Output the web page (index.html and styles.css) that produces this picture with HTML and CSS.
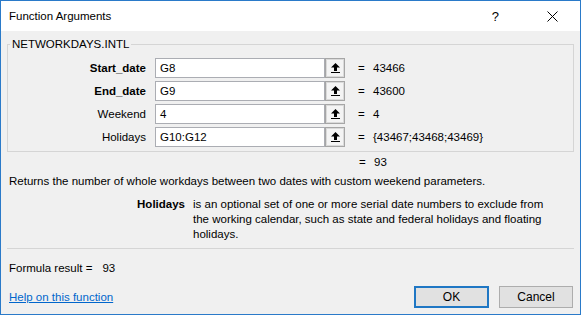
FILE: index.html
```html
<!DOCTYPE html>
<html>

<head>
    <title>Function Arguments</title>
    <link rel="stylesheet" href="styles.css">
</head>

<body>
    <div class="dialog">
        <div class="titlebar">
            <span class="title">Function Arguments</span>
            <span class="help-btn">?</span>
            <svg class="close-btn" width="11" height="11" viewBox="0 0 11 11">
                <path d="M0.5 0.5 L10.5 10.5 M10.5 0.5 L0.5 10.5" stroke="#000" stroke-width="1" fill="none"/>
            </svg>
        </div>

        <div class="content">
            <fieldset class="group">
                <legend>NETWORKDAYS.INTL</legend>

                <div class="arg-row">
                    <label class="arg-label required">Start_date</label>
                    <div class="arg-input">G8</div>
                    <div class="ref-btn">
                        <svg width="9" height="10" viewBox="0 0 9 10"><path d="M4.5 0 L9 4.5 L6 4.5 L6 8 L3 8 L3 4.5 L0 4.5 Z M0 9 H9 V10 H0 Z" fill="#000"/></svg>
                    </div>
                    <span class="eq">=</span>
                    <span class="arg-value">43466</span>
                </div>

                <div class="arg-row">
                    <label class="arg-label required">End_date</label>
                    <div class="arg-input">G9</div>
                    <div class="ref-btn">
                        <svg width="9" height="10" viewBox="0 0 9 10"><path d="M4.5 0 L9 4.5 L6 4.5 L6 8 L3 8 L3 4.5 L0 4.5 Z M0 9 H9 V10 H0 Z" fill="#000"/></svg>
                    </div>
                    <span class="eq">=</span>
                    <span class="arg-value">43600</span>
                </div>

                <div class="arg-row">
                    <label class="arg-label">Weekend</label>
                    <div class="arg-input">4</div>
                    <div class="ref-btn">
                        <svg width="9" height="10" viewBox="0 0 9 10"><path d="M4.5 0 L9 4.5 L6 4.5 L6 8 L3 8 L3 4.5 L0 4.5 Z M0 9 H9 V10 H0 Z" fill="#000"/></svg>
                    </div>
                    <span class="eq">=</span>
                    <span class="arg-value">4</span>
                </div>

                <div class="arg-row">
                    <label class="arg-label">Holidays</label>
                    <div class="arg-input">G10:G12</div>
                    <div class="ref-btn">
                        <svg width="9" height="10" viewBox="0 0 9 10"><path d="M4.5 0 L9 4.5 L6 4.5 L6 8 L3 8 L3 4.5 L0 4.5 Z M0 9 H9 V10 H0 Z" fill="#000"/></svg>
                    </div>
                    <span class="eq">=</span>
                    <span class="arg-value">{43467;43468;43469}</span>
                </div>
            </fieldset>

            <div class="func-result"><span class="eq-inline">=</span>93</div>

            <p class="func-desc">Returns the number of whole workdays between two dates with custom weekend parameters.</p>

            <div class="arg-desc">
                <span class="arg-desc-name">Holidays</span>
                <span class="arg-desc-text">is an optional set of one or more serial date numbers to exclude from the working calendar, such as state and federal holidays and floating holidays.</span>
            </div>

            <hr class="separator">

            <div class="formula-result">Formula result =<span class="formula-value">93</span></div>

            <div class="footer">
                <a href="#" class="help-link">Help on this function</a>
                <button class="btn btn-default">OK</button>
                <button class="btn">Cancel</button>
            </div>
        </div>
    </div>
</body>

</html>
```

FILE: styles.css
```css
body {
    margin: 0;
    font-family: 'Liberation Sans', Arial, sans-serif;
    font-size: 11.5px;
    color: #000;
}

.dialog {
    width: 581px;
    height: 315px;
    box-sizing: border-box;
    border: 1px solid #2a7ac9;
    background-color: #f0f0f0;
    display: flex;
    flex-direction: column;
}

.titlebar {
    height: 30px;
    background-color: #fff;
    display: flex;
    align-items: center;
    padding-left: 8px;
}

.title {
    flex: 1;
}

.help-btn {
    font-size: 13px;
    margin-right: 48px;
}

.close-btn {
    margin-right: 22px;
}

.content {
    padding: 0 7px;
    line-height: 15px;
}

.group {
    margin: 5px -1px 0 -1px;
    padding: 6px 0 4px 0;
    border: 1px solid #d5d5d5;
    min-width: 0;
}

.group legend {
    margin-left: 2px;
    padding: 0 2px;
    line-height: 16px;
}

.arg-row {
    display: grid;
    grid-template-columns: 147px 170px 20px 28px 1fr;
    align-items: center;
    height: 20px;
    margin-bottom: 3px;
}

.arg-row:last-child {
    margin-bottom: 0;
}

.arg-label {
    text-align: right;
    padding-right: 9px;
}

.required {
    font-weight: bold;
}

.arg-input {
    height: 20px;
    box-sizing: border-box;
    border: 1px solid #abadb3;
    background-color: #fff;
    padding: 2px 4px;
    line-height: 15px;
}

.ref-btn {
    height: 20px;
    box-sizing: border-box;
    border: 1px solid #a6a6a6;
    box-shadow: inset 0 0 0 1px #dadada;
    background-color: #f4f4f4;
    display: flex;
    align-items: center;
    justify-content: center;
}

.eq {
    padding-left: 13px;
}

.func-result {
    margin-top: 3px;
    padding-left: 351px;
}

.eq-inline {
    display: inline-block;
    width: 15px;
}

.func-desc {
    margin: 4px 0 0 1px;
}

.arg-desc {
    display: grid;
    grid-template-columns: 177px 360px;
    column-gap: 8px;
    margin-top: 8px;
}

.arg-desc-name {
    font-weight: bold;
    text-align: right;
}

.separator {
    margin: 6px -1px 0 -1px;
    border: none;
    border-top: 1px solid #d5d5d5;
    height: 0;
}

.formula-result {
    margin: 12px 0 0 1px;
}

.formula-value {
    margin-left: 10px;
}

.footer {
    display: flex;
    align-items: center;
    margin-top: 10px;
    padding-left: 1px;
}

.help-link {
    flex: 1;
    color: #0066cc;
    text-decoration: underline;
}

.btn {
    width: 74px;
    height: 22px;
    box-sizing: border-box;
    font-family: inherit;
    font-size: 12px;
    background-color: #e1e1e1;
    border: 1px solid #adadad;
    padding: 0;
    margin-left: 10px;
}

.btn-default {
    width: 75px;
    border: 2px solid #1f77c4;
}
```
